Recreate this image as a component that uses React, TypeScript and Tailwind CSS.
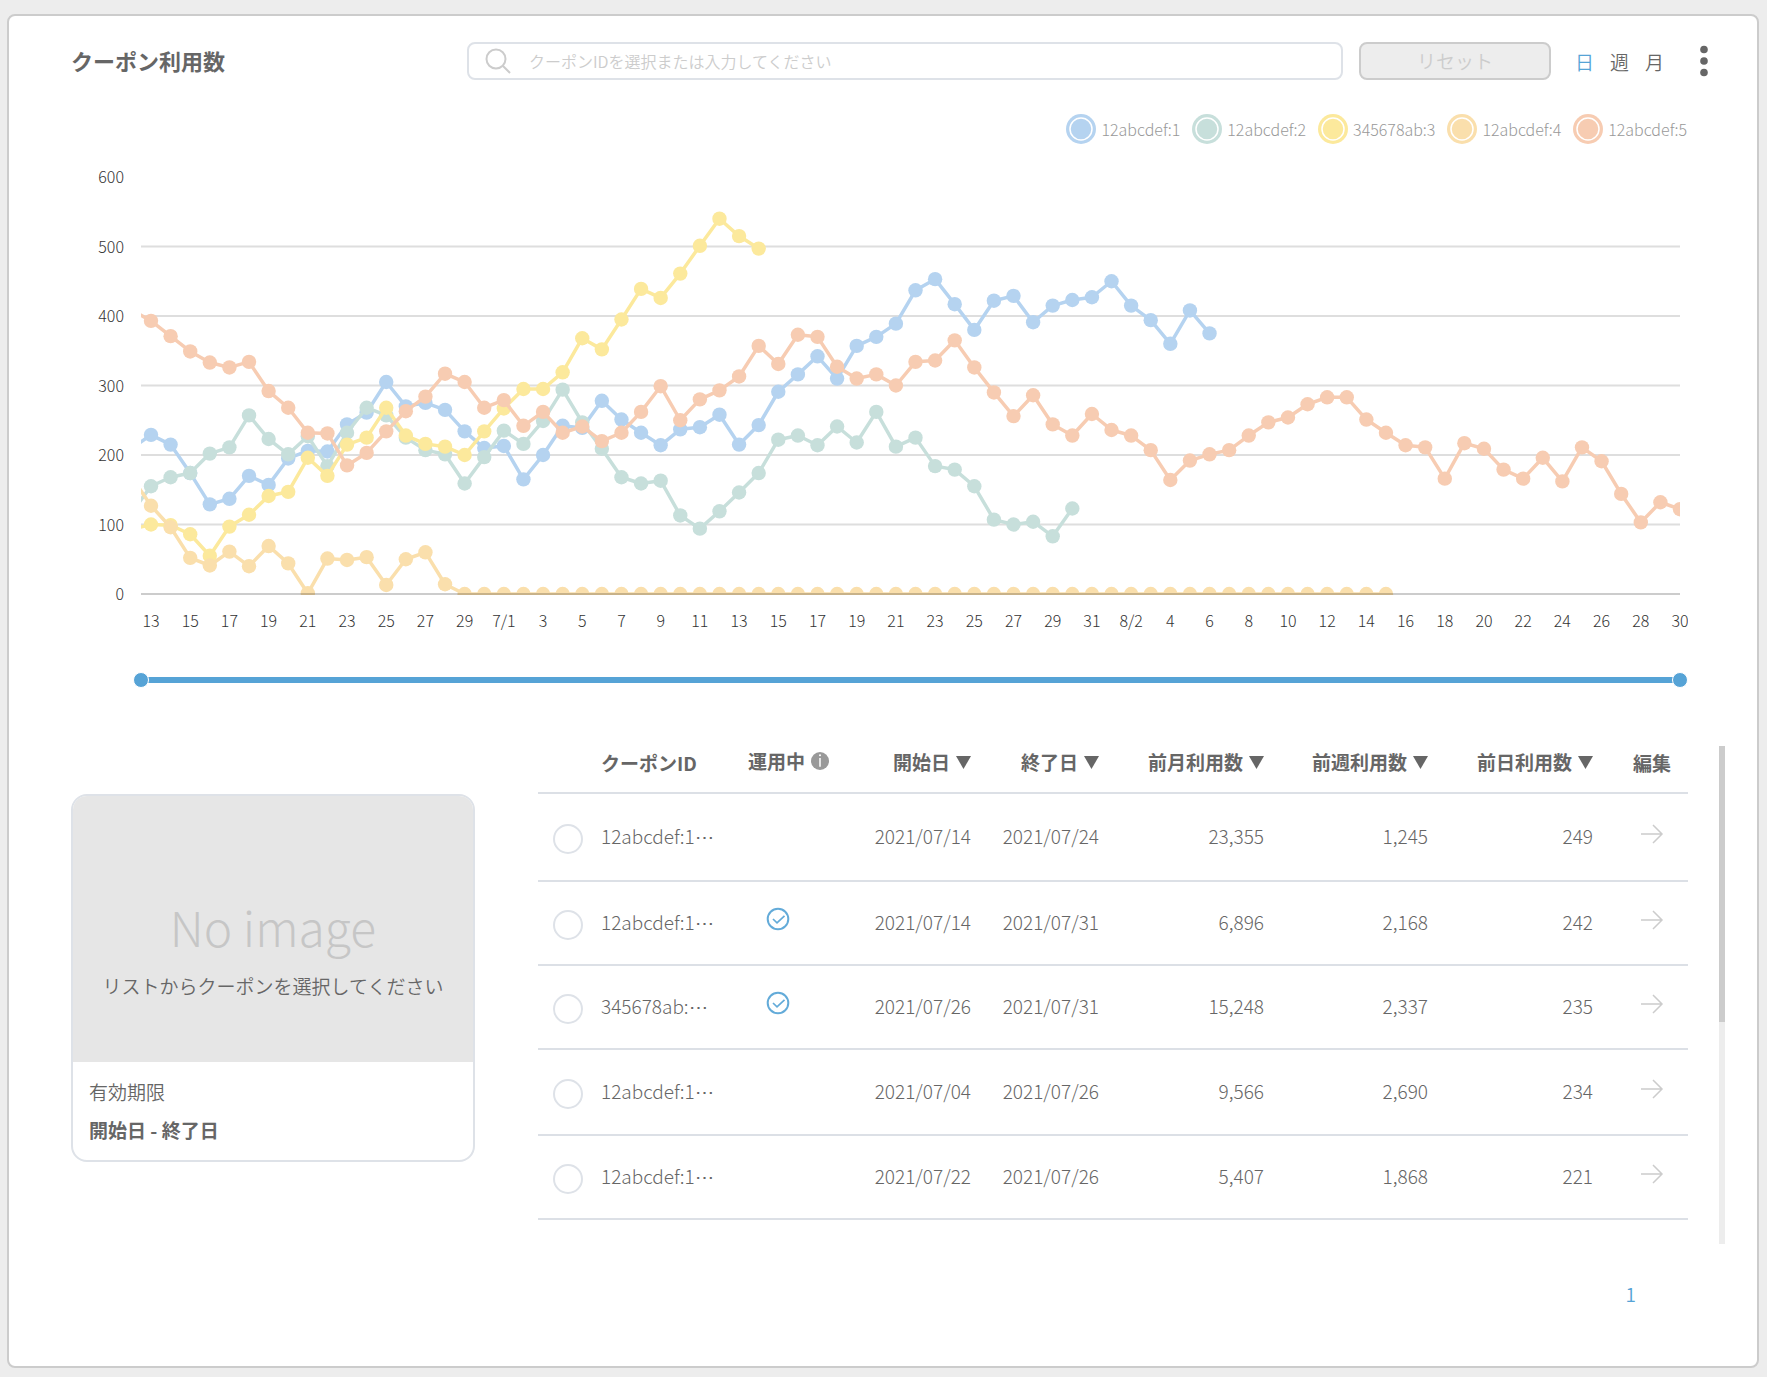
import { useState } from "react";

interface Series {
  id: string;
  color: string;
  // 6/12 から始まる日別の利用数
  values: number[];
}

interface Coupon {
  id: string;
  active: boolean;
  start: string;
  end: string;
  month: string;
  week: string;
  day: string;
}

const series: Series[] = [
  {
    id: "12abcdef:1",
    color: "#b5d3f0",
    values: [
      209, 229, 215, 174, 129, 137, 170, 157, 195, 206, 205, 244, 261, 305, 270, 275, 265, 234, 210,
      213, 165, 200, 242, 239, 278, 251, 232, 214, 237, 240, 258, 215, 243, 291, 316, 342, 310, 357,
      370, 389, 437, 453, 417, 380, 422, 429, 391, 415, 423, 427, 450, 415, 394, 360, 408, 375,
    ],
  },
  {
    id: "12abcdef:2",
    color: "#c7dfdb",
    values: [
      117, 155, 168, 174, 202, 211, 257, 223, 201, 227, 184, 232, 268, 257, 225, 207, 201, 159, 197,
      235, 216, 249, 294, 247, 209, 168, 159, 163, 113, 94, 119, 146, 174, 222, 228, 214, 241, 218,
      262, 212, 225, 184, 179, 155, 107, 100, 104, 83, 123,
    ],
  },
  {
    id: "345678ab:3",
    color: "#fce99c",
    values: [
      93, 100, 99, 86, 55, 97, 114, 141, 147, 196, 170, 215, 225, 268, 228, 216, 212, 200, 234, 267,
      295, 295, 319, 368, 352, 395, 439, 426, 461, 501, 540, 515, 497,
    ],
  },
  {
    id: "12abcdef:4",
    color: "#fadfac",
    values: [
      169, 127, 96, 52, 41, 61, 40, 69, 44, 1, 51, 49, 53, 13, 50, 60, 14,
      ...Array<number>(48).fill(0),
    ],
  },
  {
    id: "12abcdef:5",
    color: "#f7ccb2",
    values: [
      409, 393, 371, 349, 333, 326, 334, 292, 268, 232, 231, 185, 203, 234, 263, 284, 317, 305, 268,
      279, 242, 262, 232, 241, 220, 232, 262, 299, 250, 280, 293, 313, 357, 331, 373, 370, 327, 310,
      316, 300, 334, 336, 365, 326, 290, 256, 286, 244, 228, 259, 236, 228, 207, 164, 192, 201, 207,
      228, 247, 254, 273, 283, 283, 251, 232, 214, 211, 166, 217, 209, 179, 166, 196, 162, 211, 191,
      144, 103, 132, 122,
    ],
  },
];

const dayLabels = [
  "13", "15", "17", "19", "21", "23", "25", "27", "29", "7/1", "3", "5", "7", "9", "11", "13", "15",
  "17", "19", "21", "23", "25", "27", "29", "31", "8/2", "4", "6", "8", "10", "12", "14", "16", "18",
  "20", "22", "24", "26", "28", "30",
];

const coupons: Coupon[] = [
  { id: "12abcdef:1", active: false, start: "2021/07/14", end: "2021/07/24", month: "23,355", week: "1,245", day: "249" },
  { id: "12abcdef:1", active: true, start: "2021/07/14", end: "2021/07/31", month: "6,896", week: "2,168", day: "242" },
  { id: "345678ab:", active: true, start: "2021/07/26", end: "2021/07/31", month: "15,248", week: "2,337", day: "235" },
  { id: "12abcdef:1", active: false, start: "2021/07/04", end: "2021/07/26", month: "9,566", week: "2,690", day: "234" },
  { id: "12abcdef:1", active: false, start: "2021/07/22", end: "2021/07/26", month: "5,407", week: "1,868", day: "221" },
];

const CHART_W = 1617;
const CHART_H = 480;
const PLOT_LEFT = 70;
const PLOT_RIGHT = 1609;
const ZERO_Y = 434;
const FIRST_X = 80;
const STEP = (PLOT_RIGHT - FIRST_X) / 78;

const px = (i: number) => FIRST_X + (i - 1) * STEP;
const py = (v: number) => ZERO_Y - (v * 417) / 600;

function UsageChart() {
  return (
    <svg viewBox={`0 0 ${CHART_W} ${CHART_H}`} className="block w-full" role="img" aria-label="クーポン利用数">
      <clipPath id="plot">
        <rect x={PLOT_LEFT} y={0} width={PLOT_RIGHT - PLOT_LEFT} height={ZERO_Y + 1} />
      </clipPath>

      {[100, 200, 300, 400, 500].map((v) => (
        <line key={v} x1={PLOT_LEFT} x2={PLOT_RIGHT} y1={py(v)} y2={py(v)} stroke="#dedede" strokeWidth={2} />
      ))}

      <g clipPath="url(#plot)">
        {series.map((s) => (
          <g key={s.id} fill={s.color}>
            <polyline
              points={s.values.map((v, i) => `${px(i)},${py(v)}`).join(" ")}
              fill="none"
              stroke={s.color}
              strokeWidth={3.5}
              strokeLinejoin="round"
            />
            {s.values.map((v, i) => (
              <circle key={i} cx={px(i)} cy={py(v)} r={7.2} />
            ))}
          </g>
        ))}
      </g>
      <line x1={PLOT_LEFT} x2={PLOT_RIGHT} y1={ZERO_Y} y2={ZERO_Y} stroke="#000" strokeOpacity={0.2} strokeWidth={2} />

      <g className="fill-[#333] text-[16px] font-light">
        {[0, 100, 200, 300, 400, 500, 600].map((v) => (
          <text key={v} x={53} y={py(v) + 6} textAnchor="end">
            {v}
          </text>
        ))}
        {dayLabels.map((label, i) => (
          <text key={i} x={px(i * 2 + 1)} y={467} textAnchor="middle">
            {label}
          </text>
        ))}
      </g>
    </svg>
  );
}

const thumb =
  "pointer-events-none col-start-1 row-start-1 m-0 h-4 w-full appearance-none bg-transparent [&::-webkit-slider-thumb]:pointer-events-auto [&::-webkit-slider-thumb]:size-4 [&::-webkit-slider-thumb]:appearance-none [&::-webkit-slider-thumb]:rounded-full [&::-webkit-slider-thumb]:border [&::-webkit-slider-thumb]:border-white [&::-webkit-slider-thumb]:bg-[#56a3d6]";

function RangeSlider() {
  const [from, setFrom] = useState(0);
  const [to, setTo] = useState(78);

  return (
    <div className="mt-8 mr-[69px] ml-[124px] grid items-center">
      <div className="col-start-1 row-start-1 mx-2 h-[6px] bg-[#56a3d6]" />
      <input
        type="range"
        aria-label="表示期間の開始"
        min={0}
        max={78}
        value={from}
        onChange={(e) => setFrom(Math.min(Number(e.target.value), to))}
        className={thumb}
      />
      <input
        type="range"
        aria-label="表示期間の終了"
        min={0}
        max={78}
        value={to}
        onChange={(e) => setTo(Math.max(Number(e.target.value), from))}
        className={thumb}
      />
    </div>
  );
}

function SortButton({ label }: { label: string }) {
  return (
    <button type="button" className="inline-flex items-center gap-[6px] font-bold whitespace-nowrap">
      {label}
      <svg viewBox="0 0 15 13" className="h-[13px] w-[15px]" fill="currentColor" aria-hidden>
        <path d="M0 0h15L7.5 13z" />
      </svg>
    </button>
  );
}

function CouponTable() {
  const [selected, setSelected] = useState<number | null>(null);

  return (
    <table className="w-full table-fixed border-collapse text-[19px] leading-7 font-light text-[#666]">
      <colgroup>
        <col className="w-[63px]" />
        <col className="w-[147px]" />
        <col className="w-[100px]" />
        <col className="w-[123px]" />
        <col className="w-[128px]" />
        <col className="w-[165px]" />
        <col className="w-[164px]" />
        <col className="w-[165px]" />
        <col className="w-[95px]" />
      </colgroup>
      <thead>
        <tr className="h-[47px] border-b-2 border-[#dce0e6]">
          <th aria-label="選択" />
          <th className="pb-3 text-left">クーポンID</th>
          <th className="pb-4 text-left">
            <span className="flex items-center gap-[6px] whitespace-nowrap">
              運用中
              <svg viewBox="0 0 18 18" className="size-[18px] shrink-0" aria-hidden>
                <circle cx="9" cy="9" r="9" fill="#999" />
                <circle cx="9" cy="3.2" r="1" fill="#fff" />
                <path d="M9 6v8.7" stroke="#fff" strokeWidth="1.5" />
              </svg>
            </span>
          </th>
          {["開始日", "終了日", "前月利用数", "前週利用数", "前日利用数"].map((label) => (
            <th key={label} className="pb-[14px] text-right">
              <SortButton label={label} />
            </th>
          ))}
          <th className="pr-[17px] pb-3 text-right">編集</th>
        </tr>
      </thead>
      <tbody>
        {coupons.map((c, i) => (
          <tr key={i} className="h-21 border-b-2 border-[#dce0e6] first:h-22 nth-[4]:h-[86px]">
            <td className="pt-1 pl-[15px]">
              <input
                type="radio"
                name="coupon"
                aria-label={c.id}
                checked={selected === i}
                onChange={() => setSelected(i)}
                className="block size-[30px] appearance-none rounded-full border-2 border-[#dee2e8] checked:border-[#56a3d6] checked:bg-[#56a3d6]"
              />
            </td>
            <td className="pb-0.5 whitespace-nowrap">
              {c.id}
              {/* 三点リーダーを中央揃えで表示する */}
              <span className="font-['DejaVu_Sans',sans-serif] leading-none">⋯</span>
            </td>
            <td className="pb-2 pl-[18px]">
              {c.active && (
                <svg viewBox="0 0 24 24" className="size-6" fill="none" stroke="#63abd9" strokeWidth="2" role="img" aria-label="運用中">
                  <circle cx="12" cy="12" r="10.3" />
                  <path d="M7 12l4 3.8 7.5-7" strokeWidth="1.7" />
                </svg>
              )}
            </td>
            <td className="pb-0.5 text-right">{c.start}</td>
            <td className="pb-0.5 text-right">{c.end}</td>
            <td className="pb-0.5 text-right">{c.month}</td>
            <td className="pb-0.5 text-right">{c.week}</td>
            <td className="pb-0.5 text-right">{c.day}</td>
            <td className="pr-6 pb-[6px]">
              <button type="button" aria-label="編集" className="ml-auto block">
                <svg viewBox="0 0 24 24" className="size-6" fill="none" stroke="#ccc" strokeWidth="1.5">
                  <path d="M1 12h21M13 3l9 9-9 9" />
                </svg>
              </button>
            </td>
          </tr>
        ))}
      </tbody>
    </table>
  );
}

export default function App() {
  const [unit, setUnit] = useState("日");

  return (
    <main className="flex min-h-screen bg-[#ededed] pt-[14px] pr-2 pb-[9px] pl-[7px] font-['Noto_Sans_CJK_JP',sans-serif] font-[350] text-[#666]">
      <section className="min-w-0 flex-1 rounded-lg border-2 border-[#ccc] bg-white pt-[26px]">
        <header className="flex items-center pr-[45px] pl-[62px]">
          <h1 className="w-[396px] shrink-0 pb-0.5 text-[22px] leading-9 font-bold">クーポン利用数</h1>
          <label className="flex h-[38px] min-w-0 flex-1 items-center rounded-lg border-2 border-[#dee2e8] pl-4">
            <svg viewBox="0 0 26 26" className="size-[26px] shrink-0" fill="none" stroke="#ccc" strokeWidth="2" aria-hidden>
              <circle cx="11" cy="11" r="9.5" />
              <path d="M18 18l7 7" />
            </svg>
            <input
              type="text"
              aria-label="クーポンID"
              placeholder="クーポンIDを選択または入力してください"
              className="ml-[18px] min-w-0 flex-1 bg-transparent text-[16px] outline-none placeholder:text-[#ccc]"
            />
          </label>
          <button
            type="button"
            disabled
            className="ml-4 h-[38px] w-48 shrink-0 rounded-lg border-2 border-[#ccc] bg-[#ededed] text-[19px] leading-7 text-[#ccc]"
          >
            リセット
          </button>
          <div className="ml-6 flex gap-4 pt-0.5 text-[19px]">
            {["日", "週", "月"].map((u) => (
              <button
                key={u}
                type="button"
                onClick={() => setUnit(u)}
                className={u === unit ? "text-[#56a3d6]" : "text-[#666]"}
              >
                {u}
              </button>
            ))}
          </div>
          <button type="button" aria-label="メニュー" className="ml-8">
            <svg viewBox="0 0 16 32" className="h-8 w-4" fill="#666">
              <circle cx="8" cy="4.5" r="3.8" />
              <circle cx="8" cy="16" r="3.8" />
              <circle cx="8" cy="27.5" r="3.8" />
            </svg>
          </button>
        </header>

        <ul className="mt-[34px] flex justify-end gap-3 pr-[70px] text-[16px] leading-[30px] font-light text-[#999]">
          {series.map((s) => (
            <li key={s.id} className="flex items-center gap-[5px]">
              <svg viewBox="0 0 30 30" className="size-[30px]" fill={s.color} aria-hidden>
                <circle cx="15" cy="15" r="15" />
                <circle cx="15" cy="15" r="11" stroke="#fff" strokeWidth="1.5" />
              </svg>
              {s.id}
            </li>
          ))}
        </ul>

        <div className="mt-4 pr-[69px] pl-[62px]">
          <UsageChart />
        </div>
        <RangeSlider />

        <div className="mt-[58px] flex items-start pr-8 pl-[62px]">
          <aside className="mt-12 w-[404px] shrink-0 overflow-hidden rounded-2xl border-2 border-[#dee2e8]">
            <div className="flex h-[266px] flex-col items-center justify-center bg-[#e6e6e6] pt-[38px]">
              <p className="text-[48px] leading-[60px] font-light text-[#c6c6c6]">No image</p>
              <p className="mt-4 text-[19px] leading-7 whitespace-nowrap">リストからクーポンを選択してください</p>
            </div>
            <dl className="px-4 pt-[15px] pb-[15px] text-[19px] leading-[30px]">
              <dt>有効期限</dt>
              <dd className="mt-2 font-bold">開始日 - 終了日</dd>
            </dl>
          </aside>

          <div className="ml-[63px] min-w-0 flex-1">
            <CouponTable />
          </div>

          <div className="ml-[31px] h-[498px] w-[6px] shrink-0 bg-[#ededed]">
            <div className="h-[276px] bg-[#ccc]" />
          </div>
        </div>

        <nav aria-label="ページ" className="mt-9 flex justify-end pr-[121px] text-[19px] leading-7">
          <a href="#page-1" aria-current="page" className="text-[#56a3d6]">
            1
          </a>
        </nav>
      </section>
    </main>
  );
}
